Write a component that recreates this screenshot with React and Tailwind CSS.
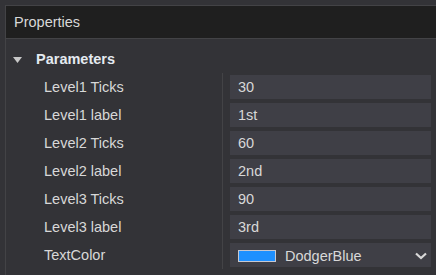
import React from "react";

const rows = [
  ["Level1 Ticks", "30"],
  ["Level1 label", "1st"],
  ["Level2 Ticks", "60"],
  ["Level2 label", "2nd"],
  ["Level3 Ticks", "90"],
  ["Level3 label", "3rd"],
];

export default function App() {
  return (
    <div
      className="w-[436px] h-[275px] bg-[#333337] overflow-hidden flex flex-col text-[14.5px] text-[#d8d8d8]"
      style={{ fontFamily: '"Liberation Sans", Arial, sans-serif' }}
    >
      <div className="h-[5px] shrink-0" />
      <div className="flex-1 ml-[5px] border-l border-t border-[#434346] flex flex-col">
        <div className="h-[33px] shrink-0 bg-[#1f1f1f] border-b border-[#434346] flex items-center pl-[8px] pt-[2px]">
          Properties
        </div>
        <div className="flex-1 flex flex-col">
          <div className="h-[32px] shrink-0 flex items-center pl-[7px] pt-[10px]">
            <svg width="9" height="6" viewBox="0 0 9 6">
              <path d="M0 0 H9 L4.5 6 Z" fill="#c8c8c8" />
            </svg>
            <span className="ml-[14px] font-bold text-[#e4eaf0]">Parameters</span>
          </div>
          <div className="flex pt-[2px] pb-[1px]">
            <div className="w-[217px] border-r border-[#434346] flex flex-col">
              {rows.map(([l]) => (
                <div key={l} className="h-[28px] flex items-center pl-[38px] pt-[2px]">
                  {l}
                </div>
              ))}
              <div className="h-[28px] flex items-center pl-[38px] pt-[2px]">TextColor</div>
            </div>
            <div className="flex flex-col pl-[7px]">
              {rows.map(([l, v]) => (
                <div key={l} className="h-[28px] py-[2px]">
                  <div className="w-[201px] h-[24px] bg-[#3f3f46] flex items-center pl-[8px] pt-[2px]">
                    {v}
                  </div>
                </div>
              ))}
              <div className="h-[28px] py-[2px]">
                <div className="w-[201px] h-[24px] bg-[#3f3f46] flex items-center pl-[8px]">
                  <div className="w-[38px] h-[12px] border border-[#c8c8d0] bg-[#1e90ff] mt-[1px]" />
                  <span className="ml-[9px] mt-[3px]">DodgerBlue</span>
                  <svg width="12" height="8" viewBox="0 0 12 8" className="ml-auto mr-[4px] mt-[1px]">
                    <path d="M1 1.5 L6 6 L11 1.5" fill="none" stroke="#d8d8d8" strokeWidth="2.2" />
                  </svg>
                </div>
              </div>
            </div>
          </div>
        </div>
      </div>
    </div>
  );
}
